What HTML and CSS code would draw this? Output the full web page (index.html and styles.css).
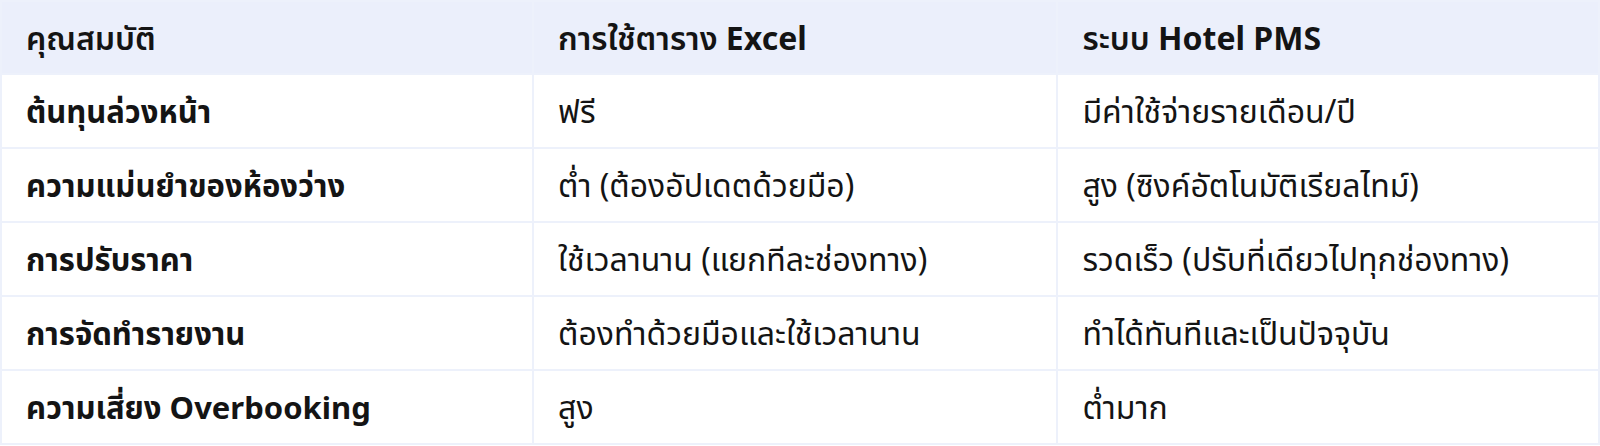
FILE: index.html
```html
<!DOCTYPE html>
<html lang="th">
<head>
<meta charset="utf-8">
<link rel="stylesheet" href="styles.css">
</head>
<body>
<table class="compare">
  <colgroup>
    <col class="c1"><col class="c2"><col class="c3">
  </colgroup>
  <thead>
    <tr>
      <th>คุณสมบัติ</th>
      <th>การใช้ตาราง <span class="en">Excel</span></th>
      <th>ระบบ <span class="en">Hotel PMS</span></th>
    </tr>
  </thead>
  <tbody>
    <tr><td class="feat">ต้นทุนล่วงหน้า</td><td>ฟรี</td><td>มีค่าใช้จ่ายรายเดือน/ปี</td></tr>
    <tr><td class="feat">ความแม่นยำของห้องว่าง</td><td>ต่ำ (ต้องอัปเดตด้วยมือ)</td><td>สูง (ซิงค์อัตโนมัติเรียลไทม์)</td></tr>
    <tr><td class="feat">การปรับราคา</td><td>ใช้เวลานาน (แยกทีละช่องทาง)</td><td>รวดเร็ว (ปรับที่เดียวไปทุกช่องทาง)</td></tr>
    <tr><td class="feat">การจัดทำรายงาน</td><td>ต้องทำด้วยมือและใช้เวลานาน</td><td>ทำได้ทันทีและเป็นปัจจุบัน</td></tr>
    <tr><td class="feat">ความเสี่ยง Overbooking</td><td>สูง</td><td>ต่ำมาก</td></tr>
  </tbody>
</table>
</body>
</html>
```
FILE: styles.css
```css
html, body {
  margin: 0;
  padding: 0;
  background: #ffffff;
}
body {
  font-family: "Noto Sans", "Noto Sans Thai", sans-serif;
  color: #141414;
}
.compare {
  width: 1600px;
  border-collapse: collapse;
  font-size: 32px;
  line-height: 1.3;
}
.c1 { width: 533px; }
.c2 { width: 525px; }
.c3 { width: 542px; }
.compare th,
.compare td {
  border: 2px solid #edf1fb;
  text-align: left;
  vertical-align: middle;
  padding: 0 24px;
  height: 72px;
  white-space: nowrap;
}
.compare thead th {
  background: #ebeffb;
  font-weight: 600;
  height: 71px;
}
.compare thead th .en {
  font-weight: 700;
}
.compare td.feat {
  font-weight: 700;
  font-size: 31px;
}
```
